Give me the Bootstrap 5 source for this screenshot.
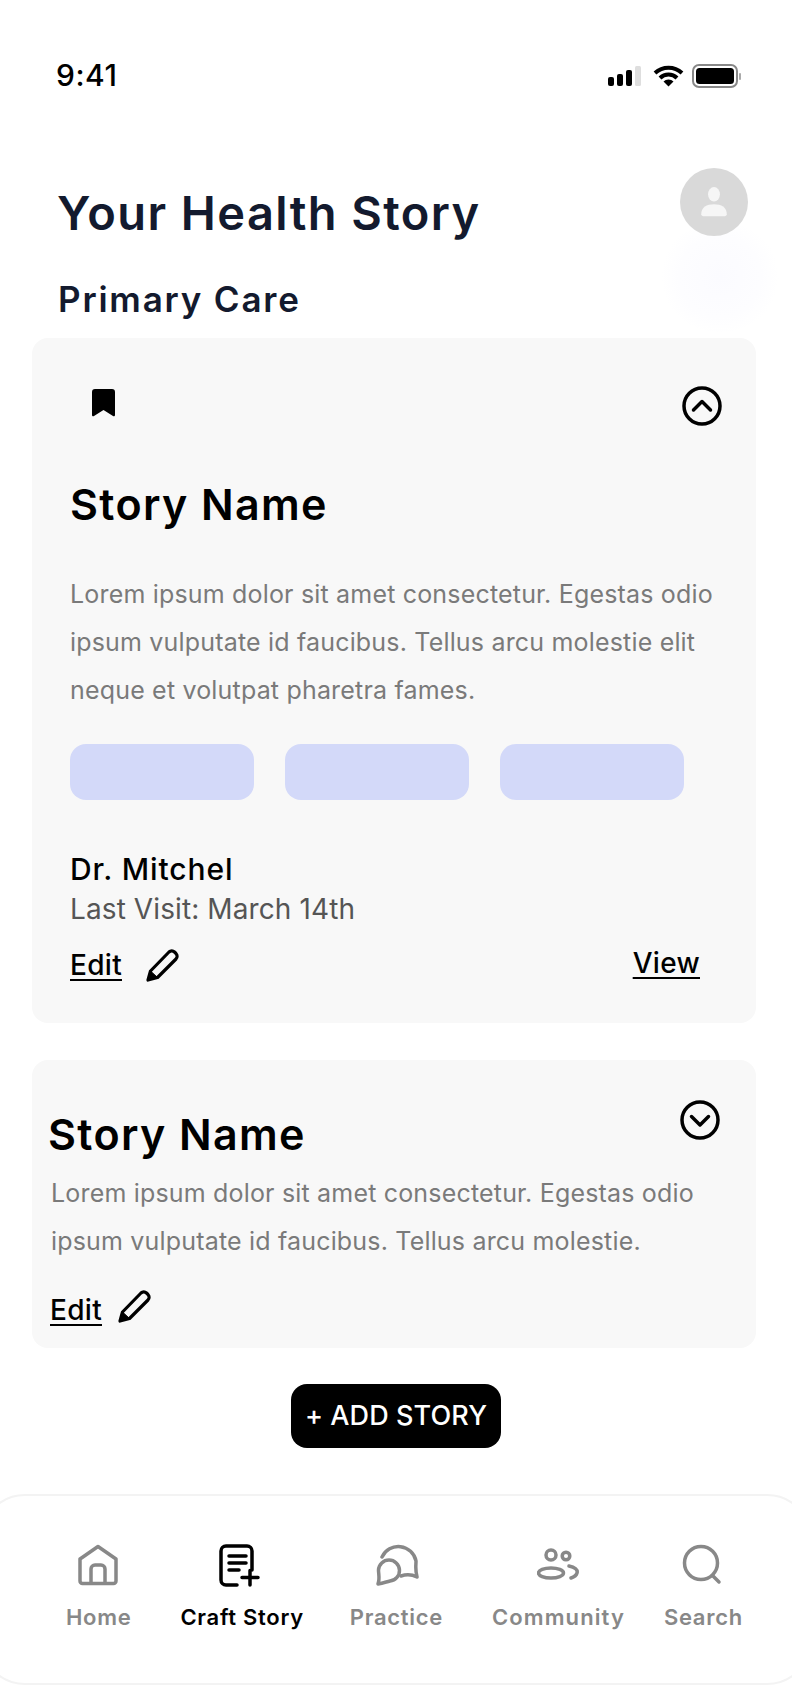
<!DOCTYPE html>
<html lang="en">
<head>
    <meta charset="UTF-8">
    <meta name="viewport" content="width=device-width, initial-scale=1.0">
    <title>Your Health Story</title>
    <link href="https://cdn.jsdelivr.net/npm/bootstrap@5.3.3/dist/css/bootstrap.min.css" rel="stylesheet">
    <script src="https://cdn.jsdelivr.net/npm/bootstrap@5.3.3/dist/js/bootstrap.bundle.min.js"></script>

    <style>
        * {
            font-family: Inter, "Liberation Sans", sans-serif;
        }
        body {
            background-color: #fff;
            width: 792px;
            height: 1688px;
            overflow: hidden;
        }
        .status-row {
            padding: 55px 50px 0 56px;
            height: 96px;
        }
        .status-pic {
            margin-top: 8px;
        }
        .clock {
            font-size: 30px;
            line-height: 40px;
            font-weight: 500;
            letter-spacing: 0.5px;
            color: #000;
        }
        .head-row {
            margin-top: 87px;
            padding: 0 44px 0 57px;
        }
        .page-title {
            font-size: 47px;
            line-height: 60px;
            font-weight: 600;
            letter-spacing: 1.4px;
            color: #131a2e;
            margin: 0;
        }
        .avatar-dot {
            width: 68px;
            height: 68px;
            margin-top: -15px;
            border-radius: 50%;
            background-color: #d9d9d9;
        }
        .glow-dot {
            top: 222px;
            left: 660px;
            width: 120px;
            height: 110px;
            border-radius: 50%;
            background: radial-gradient(circle, #fbfbff 0%, #fdfdff 50%, #fff 72%);
        }
        .section-title {
            font-size: 35px;
            line-height: 44px;
            font-weight: 600;
            letter-spacing: 1.8px;
            color: #131a2e;
            margin: 34px 0 17px 58px;
        }
        .story-box {
            margin: 0 36px 0 32px;
            background-color: #f8f8f8;
            border: 0;
            border-radius: 16px;
        }
        .story-one {
            padding: 48px 34px 41px 38px;
        }
        .story-two {
            margin-top: 37px;
            padding: 40px 36px 25px 16px;
        }
        .bookmark-icon {
            margin: 3px 0 0 22px;
        }
        .story-name {
            font-size: 43px;
            line-height: 56px;
            font-weight: 600;
            letter-spacing: 1.35px;
            color: #000;
            margin: 0;
        }
        .story-one .story-name {
            margin-top: 50px;
        }
        .story-two .story-name {
            margin-top: 6px;
        }
        .story-text {
            font-size: 25px;
            line-height: 48px;
            letter-spacing: 0.18px;
            color: #7a7a7a;
            white-space: nowrap;
            margin: 0;
        }
        .story-one .story-text {
            margin-top: 38px;
        }
        .story-two .story-text {
            margin: 7px 0 0 3px;
        }
        .tag-row {
            margin-top: 30px;
            gap: 31px;
        }
        .tag-pill {
            width: 184px;
            height: 56px;
            border-radius: 16px;
            background-color: #d3d9f9;
        }
        .doc-name {
            font-size: 30px;
            line-height: 40px;
            font-weight: 500;
            letter-spacing: 0.9px;
            color: #000;
            margin-top: 49px;
        }
        .doc-visit {
            font-size: 28px;
            line-height: 36px;
            letter-spacing: 0.1px;
            color: #555;
            margin-top: 2px;
        }
        .act-row {
            margin-top: 21px;
            height: 34px;
        }
        .story-two .act-row {
            margin: 24px 0 0 2px;
        }
        .act-link {
            font-size: 28px;
            line-height: 34px;
            font-weight: 500;
            letter-spacing: 0.3px;
            color: #000;
            text-decoration: underline;
            text-underline-offset: 4px;
            text-decoration-thickness: 2px;
        }
        .story-two .act-link {
            margin-top: 7px;
        }
        .pencil-one {
            margin-left: 24px;
        }
        .pencil-two {
            margin-left: 16px;
        }
        .view-link {
            margin: -4px 22px 0 0;
        }
        .add-btn {
            margin-top: 36px;
            width: 210px;
            height: 64px;
            border-radius: 16px;
            background-color: #000;
            border: 0;
            color: #fff;
            font-size: 27px;
            font-weight: 500;
            letter-spacing: 0.1px;
            padding: 0;
        }
        .tab-bar {
            margin: 46px -20px 0;
            height: 191px;
            padding: 48px 0 0 84px;
            gap: 49px;
            border: 2px solid #f3f3f3;
            border-radius: 45px;
        }
        .tab-link {
            color: #888;
            font-size: 22px;
            line-height: 30px;
            font-weight: 600;
            letter-spacing: 0.7px;
            text-decoration: none;
        }
        .tab-link.tab-on {
            color: #000;
        }
        .tab-practice {
            margin-left: -3px;
        }
        .tab-community {
            letter-spacing: 1.1px;
        }
        .tab-last {
            margin-left: -10px;
        }
        .tab-pic {
            height: 48px;
            margin-bottom: 10px;
        }
        .pic-home {
            margin-right: 2px;
        }
        .pic-craft {
            margin-right: 4px;
        }
    </style>
</head>

<body>
    <div class="position-relative">
        <div class="glow-dot position-absolute"></div>

        <!-- status bar -->
        <div class="status-row d-flex justify-content-between position-relative">
            <span class="clock">9:41</span>
            <svg class="status-pic" width="135" height="26" viewBox="0 0 135 26">
                <rect x="1" y="14" width="6" height="9" rx="2" fill="#000"/>
                <rect x="10" y="11" width="6" height="12" rx="2" fill="#000"/>
                <rect x="19" y="7" width="6" height="16" rx="2" fill="#000"/>
                <rect x="28" y="3" width="6" height="20" rx="1.5" fill="#dedede"/>
                <path d="M48 10 a20 20 0 0 1 27 0" fill="none" stroke="#000" stroke-width="4"/>
                <path d="M53 15 a12 12 0 0 1 17 0" fill="none" stroke="#000" stroke-width="4"/>
                <path d="M61.5 23.5 L56.5 18.5 a7 7 0 0 1 10 0 Z" fill="#000"/>
                <rect x="86" y="2" width="44" height="22" rx="6" fill="none" stroke="#888" stroke-width="2"/>
                <rect x="89" y="5" width="38" height="16" rx="3.5" fill="#000"/>
                <rect x="132" y="10" width="2" height="7" rx="1" fill="#aaa"/>
            </svg>
        </div>

        <!-- page heading -->
        <div class="head-row d-flex justify-content-between align-items-start position-relative">
            <h1 class="page-title">Your Health Story</h1>
            <div class="avatar-dot d-flex align-items-center justify-content-center">
                <svg width="28" height="31" viewBox="0 0 30 34">
                    <ellipse cx="15" cy="8" rx="6.5" ry="8" fill="#f6f6f6"/>
                    <path d="M1 30 c0-8 6-11 14-11 s14 3 14 11 a2 2 0 0 1-2 2 H3 a2 2 0 0 1-2-2 Z" fill="#f6f6f6"/>
                </svg>
            </div>
        </div>
        <h2 class="section-title position-relative">Primary Care</h2>

        <!-- expanded story -->
        <div class="card story-box story-one">
            <div class="d-flex justify-content-between align-items-start">
                <svg class="bookmark-icon" width="23" height="28" viewBox="0 0 23 28">
                    <path d="M3 0 H20 a3 3 0 0 1 3 3 V26 a1.2 1.2 0 0 1-2 1 L11.5 21 L2 27 a1.2 1.2 0 0 1-2-1 V3 a3 3 0 0 1 3-3 Z" fill="#000"/>
                </svg>
                <svg width="40" height="40" viewBox="0 0 40 40">
                    <circle cx="20" cy="20" r="18" fill="none" stroke="#000" stroke-width="3.5"/>
                    <path d="M11.5 24 L20 15.5 L28.5 24" fill="none" stroke="#000" stroke-width="3.5" stroke-linecap="round" stroke-linejoin="round"/>
                </svg>
            </div>
            <h3 class="story-name">Story Name</h3>
            <p class="story-text">Lorem ipsum dolor sit amet consectetur. Egestas odio<br>ipsum vulputate id faucibus. Tellus arcu molestie elit<br>neque et volutpat pharetra fames.</p>
            <div class="tag-row d-flex">
                <span class="tag-pill"></span>
                <span class="tag-pill"></span>
                <span class="tag-pill"></span>
            </div>
            <div class="doc-name">Dr. Mitchel</div>
            <div class="doc-visit">Last Visit: March 14th</div>
            <div class="act-row d-flex justify-content-between align-items-center">
                <div class="d-flex align-items-center">
                    <a href="#" class="act-link">Edit</a>
                    <svg class="pencil-one" width="34" height="34" viewBox="0 0 34 34">
                        <path d="M2 32 L4.5 23 L23 4 a4 4 0 0 1 5.5 0 l1.5 1.5 a4 4 0 0 1 0 5.5 L11.5 29.5 Z" fill="none" stroke="#000" stroke-width="3.2" stroke-linejoin="round"/>
                        <path d="M4.5 23 L11.5 29.5 L2 32 Z" fill="#000" stroke="#000" stroke-width="1" stroke-linejoin="round"/>
                    </svg>
                </div>
                <a href="#" class="act-link view-link">View</a>
            </div>
        </div>

        <!-- collapsed story -->
        <div class="card story-box story-two">
            <div class="d-flex justify-content-between align-items-start">
                <h3 class="story-name">Story Name</h3>
                <svg width="40" height="40" viewBox="0 0 40 40">
                    <circle cx="20" cy="20" r="18" fill="none" stroke="#000" stroke-width="3.5"/>
                    <path d="M11.5 16.5 L20 25 L28.5 16.5" fill="none" stroke="#000" stroke-width="3.5" stroke-linecap="round" stroke-linejoin="round"/>
                </svg>
            </div>
            <p class="story-text">Lorem ipsum dolor sit amet consectetur. Egestas odio<br>ipsum vulputate id faucibus. Tellus arcu molestie.</p>
            <div class="act-row d-flex align-items-center">
                <a href="#" class="act-link">Edit</a>
                <svg class="pencil-two" width="34" height="34" viewBox="0 0 34 34">
                    <path d="M2 32 L4.5 23 L23 4 a4 4 0 0 1 5.5 0 l1.5 1.5 a4 4 0 0 1 0 5.5 L11.5 29.5 Z" fill="none" stroke="#000" stroke-width="3.2" stroke-linejoin="round"/>
                    <path d="M4.5 23 L11.5 29.5 L2 32 Z" fill="#000" stroke="#000" stroke-width="1" stroke-linejoin="round"/>
                </svg>
            </div>
        </div>

        <div class="d-flex justify-content-center">
            <button class="btn add-btn" type="button">+ ADD STORY</button>
        </div>

        <!-- bottom tabs -->
        <nav class="tab-bar d-flex">
            <a href="#" class="tab-link d-flex flex-column align-items-center">
                <svg class="tab-pic pic-home" width="42" height="48" viewBox="0 0 42 48">
                    <path d="M3 15 L21 2.5 L39 15 V37 a2.5 2.5 0 0 1-2.5 2.5 H5.5 A2.5 2.5 0 0 1 3 37 Z" fill="none" stroke="#888" stroke-width="3.5" stroke-linejoin="round"/>
                    <path d="M14 39.5 V25 a4 4 0 0 1 4-4 h6 a4 4 0 0 1 4 4 V39.5" fill="none" stroke="#888" stroke-width="3.5"/>
                </svg>
                Home
            </a>
            <a href="#" class="tab-link tab-on d-flex flex-column align-items-center">
                <svg class="tab-pic pic-craft" width="42" height="48" viewBox="0 0 42 48">
                    <path d="M33 26 V7 a5 5 0 0 0-5-5 H7 a5 5 0 0 0-5 5 V36 a5 5 0 0 0 5 5 H18" fill="none" stroke="#000" stroke-width="3.5" stroke-linecap="round"/>
                    <path d="M10 12 H27 M10 19 H27 M10 26 H20 M23 33.5 H39 M31 26.5 V41" fill="none" stroke="#000" stroke-width="3.5" stroke-linecap="round"/>
                </svg>
                Craft Story
            </a>
            <a href="#" class="tab-link tab-practice d-flex flex-column align-items-center">
                <svg class="tab-pic" width="46" height="48" viewBox="0 0 46 48">
                    <path d="M9 13 A18 18 0 0 1 43 17 C43 22 42 25 44 33 C38 30 34 30 28 32" fill="none" stroke="#888" stroke-width="3.5" stroke-linejoin="round" stroke-linecap="round"/>
                    <path d="M5.5 26 A10.5 10.5 0 1 1 17 37 C13 38 10 39 5 40 C7 35 5.5 30 5.5 26 Z" fill="none" stroke="#888" stroke-width="3.5" stroke-linejoin="round"/>
                </svg>
                Practice
            </a>
            <a href="#" class="tab-link tab-community d-flex flex-column align-items-center">
                <svg class="tab-pic" width="42" height="48" viewBox="0 0 42 48">
                    <circle cx="14" cy="11" r="5" fill="none" stroke="#888" stroke-width="3.5"/>
                    <circle cx="29" cy="12" r="3.8" fill="none" stroke="#888" stroke-width="3.5"/>
                    <ellipse cx="14" cy="29" rx="12.5" ry="5" fill="none" stroke="#888" stroke-width="3.5"/>
                    <path d="M32 22 C38 23 41 26 40 29 C39.5 31 37 33 34 34" fill="none" stroke="#888" stroke-width="3.5" stroke-linecap="round"/>
                </svg>
                Community
            </a>
            <a href="#" class="tab-link tab-last d-flex flex-column align-items-center">
                <svg class="tab-pic" width="42" height="48" viewBox="0 0 42 48">
                    <circle cx="19" cy="19" r="16.5" fill="none" stroke="#888" stroke-width="3.5"/>
                    <path d="M31 32 L37 38" fill="none" stroke="#888" stroke-width="3.5" stroke-linecap="round"/>
                </svg>
                Search
            </a>
        </nav>
    </div>
</body>
</html>
